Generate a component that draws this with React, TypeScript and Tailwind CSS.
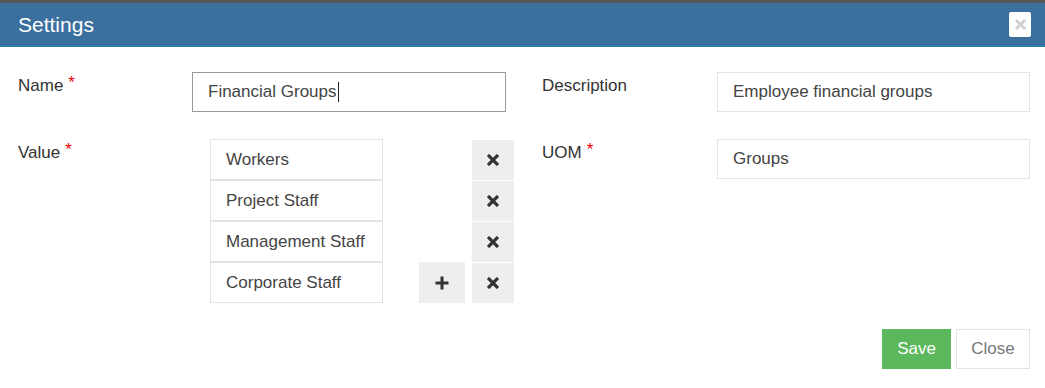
import React from "react";

const XIcon = ({ size = 12, color = "#333", stroke = 3 }: { size?: number; color?: string; stroke?: number }) => (
  <svg width={size} height={size} viewBox="0 0 12 12">
    <path d="M1 1 L11 11 M11 1 L1 11" stroke={color} strokeWidth={stroke} strokeLinecap="butt" />
  </svg>
);

const PlusIcon = () => (
  <svg width="14" height="14" viewBox="0 0 14 14">
    <path d="M7 0.5 V13.5 M0.5 7 H13.5" stroke="#333" strokeWidth="3" />
  </svg>
);

const Req = () => <span className="text-[#e00] ml-[5px] relative top-[-3px]">*</span>;

export default function App() {
  const values = ["Workers", "Project Staff", "Management Staff", "Corporate Staff"];
  return (
    <div className="w-[1045px] h-[388px] bg-white overflow-hidden text-[17px]" style={{ fontFamily: '"Liberation Sans", Arial, sans-serif' }}>
      <div className="h-[3px] bg-[#575757]" />
      <div className="h-[42px] bg-[#3b6f9d] flex items-center justify-between pl-[18px] pr-[14px]">
        <span className="text-white text-[21px] leading-none">Settings</span>
        <div className="w-[22px] h-[25px] bg-white rounded-[2px] flex items-center justify-center">
          <XIcon size={11} color="#cfcfcf" stroke={3} />
        </div>
      </div>
      <div className="h-[2px] bg-[#2a7fa3]" />

      <div className="pt-[25px] pl-[18px] pr-[15px] text-[#333]">
        <div className="flex">
          <div className="flex w-[524px]">
            <div className="w-[174px] pt-[4px] leading-[20px]">Name<Req /></div>
            <div className="w-[314px] h-[40px] border border-[#999] flex items-center pl-[15px] text-[#444]">
              Financial Groups<span className="inline-block w-[1px] h-[20px] bg-[#222] ml-[1px]" />
            </div>
          </div>
          <div className="flex">
            <div className="w-[175px] pt-[4px] leading-[20px]">Description</div>
            <div className="w-[313px] h-[40px] border border-[#e3e3e3] flex items-center pl-[15px] text-[#444]">
              Employee financial groups
            </div>
          </div>
        </div>

        <div className="flex mt-[27px]">
          <div className="flex w-[524px]">
            <div className="w-[192px] pt-[4px] leading-[20px]">Value<Req /></div>
            <div className="flex items-end">
              <div className="flex flex-col w-[173px]">
                {values.map((v) => (
                  <div key={v} className="h-[41px] border border-[#e3e3e3] flex items-center pl-[15px] text-[#444]">
                    {v}
                  </div>
                ))}
              </div>
              <div className="ml-[36px] w-[46px] h-[41px] bg-[#eeeeee] flex items-center justify-center">
                <PlusIcon />
              </div>
              <div className="ml-[7px] flex flex-col gap-[1px] w-[42px]">
                {values.map((v) => (
                  <div key={v} className="h-[40px] bg-[#eeeeee] flex items-center justify-center">
                    <XIcon size={12} stroke={3.2} />
                  </div>
                ))}
              </div>
            </div>
          </div>
          <div className="flex items-start">
            <div className="w-[175px] pt-[4px] leading-[20px]">UOM<Req /></div>
            <div className="w-[313px] h-[40px] border border-[#e3e3e3] flex items-center pl-[15px] text-[#444]">
              Groups
            </div>
          </div>
        </div>

        <div className="flex justify-end mt-[26px] gap-[5px]">
          <button className="w-[69px] h-[40px] bg-[#5cb85c] text-white">Save</button>
          <button className="w-[74px] h-[40px] bg-white border border-[#e3e3e3] text-[#777]">Close</button>
        </div>
      </div>
    </div>
  );
}
